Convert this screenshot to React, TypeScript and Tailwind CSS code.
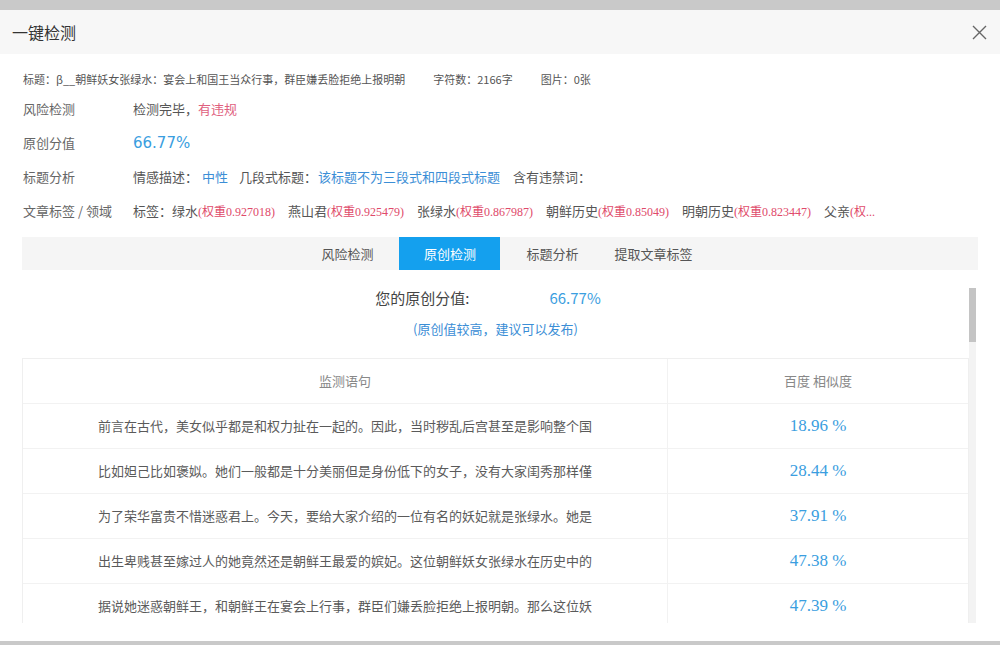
import React from "react";

const sans = { fontFamily: '"Noto Sans CJK SC", "Noto Sans", sans-serif' };
const serifNum = { fontFamily: '"Liberation Serif", "Noto Sans CJK SC", serif' };

const tags: [string, string][] = [
  ["绿水", "0.927018"],
  ["燕山君", "0.925479"],
  ["张绿水", "0.867987"],
  ["朝鲜历史", "0.85049"],
  ["明朝历史", "0.823447"],
];

const rows: [string, string][] = [
  ["前言在古代，美女似乎都是和权力扯在一起的。因此，当时秽乱后宫甚至是影响整个国", "18.96 %"],
  ["比如妲己比如褒姒。她们一般都是十分美丽但是身份低下的女子，没有大家闺秀那样僅", "28.44 %"],
  ["为了荣华富贵不惜迷惑君上。今天，要给大家介绍的一位有名的妖妃就是张绿水。她是", "37.91 %"],
  ["出生卑贱甚至嫁过人的她竟然还是朝鲜王最爱的嫔妃。这位朝鲜妖女张绿水在历史中的", "47.38 %"],
  ["据说她迷惑朝鲜王，和朝鲜王在宴会上行事，群臣们嫌丢脸拒绝上报明朝。那么这位妖", "47.39 %"],
];

function InfoRow({ label, children }: { label: string; children: React.ReactNode }) {
  return (
    <div className="flex h-[34px] items-center text-[13px]">
      <div className="w-[110px] shrink-0 text-[#666]">{label}</div>
      <div className="flex items-center text-[#555] whitespace-nowrap">{children}</div>
    </div>
  );
}

export default function App() {
  return (
    <div className="w-[1000px] h-[645px] flex flex-col bg-white overflow-hidden" style={sans}>
      <div className="h-[10px] bg-[#c9c9c9] shrink-0" />
      <div className="h-[44px] shrink-0 bg-[#f7f7f7] flex items-center justify-between pl-[12px] pr-[13px]">
        <div className="text-[16px] text-[#333]">一键检测</div>
        <svg width="15" height="15" viewBox="0 0 15 15" className="text-[#666]">
          <path d="M1 1L14 14M14 1L1 14" stroke="currentColor" strokeWidth="1.4" fill="none" />
        </svg>
      </div>

      <div className="flex-1 flex flex-col px-[22px] min-h-0">
        <div className="pt-[17px] pl-[1px] flex items-center h-[33px] text-[11px] text-[#555] whitespace-nowrap">
          <span>标题：β__朝鲜妖女张绿水：宴会上和国王当众行事，群臣嫌丢脸拒绝上报明朝</span>
          <span className="ml-[28px]">字符数：2166字</span>
          <span className="ml-[28px]">图片：0张</span>
        </div>
        <div className="pl-[1px] mt-[5px]">
          <InfoRow label="风险检测">
            检测完毕，<span className="text-[#e0607e]">有违规</span>
          </InfoRow>
          <InfoRow label="原创分值">
            <span className="text-[15px] text-[#3a9ee0]" style={{ fontFamily: '"DejaVu Sans", sans-serif' }}>66.77%</span>
          </InfoRow>
          <InfoRow label="标题分析">
            情感描述：<span className="ml-[4px] text-[#3b8ed6]">中性</span>
            <span className="ml-[11px]">几段式标题：</span>
            <span className="ml-[1px] text-[#3b8ed6]">该标题不为三段式和四段式标题</span>
            <span className="ml-[13px]">含有违禁词：</span>
          </InfoRow>
          <InfoRow label="文章标签 / 领域">
            标签：
            {tags.map(([t, w], i) => (
              <span key={t} className={i === 0 ? "" : "ml-[13px]"}>
                {t}
                <span className="text-[12px] text-[#e04a6a]" style={serifNum}>(权重{w})</span>
              </span>
            ))}
            <span className="ml-[13px]">
              父亲<span className="text-[12px] text-[#e04a6a]" style={serifNum}>(权...</span>
            </span>
          </InfoRow>
        </div>

        <div className="mt-[9px] h-[33px] shrink-0 bg-[#f5f5f5] flex items-stretch justify-center pl-[14px] text-[13px] text-[#555]">
          <div className="px-[18px] flex items-center">风险检测</div>
          <div className="mx-[8px] w-[101px] flex items-center justify-center bg-[#14a0ee] text-white">原创检测</div>
          <div className="px-[18px] flex items-center">标题分析</div>
          <div className="px-[18px] flex items-center">提取文章标签</div>
        </div>

        <div className="flex h-[353px] shrink-0">
          <div className="w-[947px] overflow-hidden">
            <div className="pt-[18px] pr-[15px] h-[38px] flex items-center justify-center">
              <span className="text-[15px] text-[#444]">您的原创分值:</span>
              <span className="ml-[80px] text-[15px] text-[#3a9ee0]">66.77%</span>
            </div>
            <div className="mt-[11px] h-[20px] flex items-center justify-center text-[13px] text-[#3b8ed6]">
              (原创值较高，建议可以发布)
            </div>
            <div className="mt-[19px] border border-[#efefef]">
              <div className="flex h-[44px] text-[13px] text-[#888]">
                <div className="w-[645px] flex items-center justify-center border-r border-[#f2f2f2]">监测语句</div>
                <div className="flex-1 flex items-center justify-center">百度 相似度</div>
              </div>
              {rows.map(([s, p]) => (
                <div key={p} className="flex h-[45px] border-t border-[#f2f2f2]">
                  <div className="w-[645px] flex items-center justify-center border-r border-[#f2f2f2] text-[13px] text-[#5a5a5a] whitespace-nowrap">
                    {s}
                  </div>
                  <div className="flex-1 flex items-center justify-center text-[17px] text-[#3a9ee0]" style={serifNum}>
                    {p}
                  </div>
                </div>
              ))}
            </div>
          </div>
          <div className="w-[7px] pt-[18px] flex flex-col">
            <div className="flex-1 bg-[#f3f3f3]">
              <div className="h-[54px] bg-[#c4c4c4]" />
            </div>
          </div>
        </div>
        <div className="flex-1" />
      </div>
      <div className="h-[4px] bg-[#c9c9c9] shrink-0" />
    </div>
  );
}
